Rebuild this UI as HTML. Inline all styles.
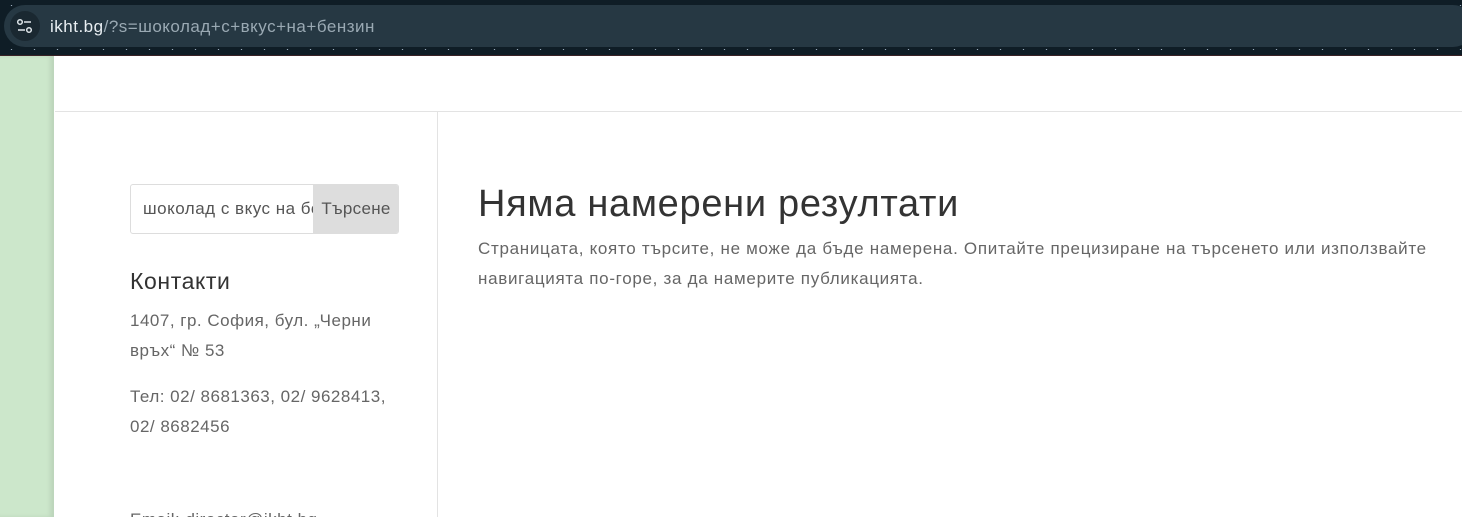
<!DOCTYPE html>
<html><head><meta charset="utf-8">
<style>
html,body{margin:0;padding:0;width:1462px;height:517px;overflow:hidden;background:#fff;font-family:"Liberation Sans","DejaVu Sans",sans-serif;}
.wrap{position:relative;width:1462px;height:517px;overflow:hidden;}
.top{position:absolute;left:0;top:0;width:1462px;height:55px;background:#0f1d26;
background-image:radial-gradient(#9ab 0.6px,transparent 1px),radial-gradient(#567 0.6px,transparent 1px);background-size:23px 11px,37px 7px;background-position:0 0,11px 3px;border-bottom:1px solid #3a2226;}
.pill{position:absolute;left:4px;top:5px;width:1470px;height:42px;border-radius:21px;background:#263843;}
.ic{position:absolute;left:6px;top:6px;width:30px;height:30px;border-radius:15px;background:#1a2831;}
.url{position:absolute;left:46px;top:12px;font-size:17px;color:#e8eef2;letter-spacing:0.5px;}
.url span{color:#9aa9b3;}
.green{position:absolute;left:0;top:56px;width:54px;height:461px;background:#cce7cb;box-shadow:inset -4px 0 4px rgba(0,0,0,0.08);}
.hdr{position:absolute;left:55px;top:111px;width:1407px;height:1px;background:#e3e3e3;}
.vline{position:absolute;left:437px;top:112px;width:1px;height:405px;background:#e3e3e3;}
.search{position:absolute;left:130px;top:184px;width:267px;height:48px;border:1px solid #ddd;border-radius:3px;overflow:hidden;}
.search .t{position:absolute;left:12px;top:14px;font-size:17px;letter-spacing:0.5px;color:#555;white-space:nowrap;width:170px;overflow:hidden;}
.search .b{position:absolute;left:182px;top:0;width:86px;height:48px;background:#ddd;color:#555;font-size:17px;letter-spacing:0.3px;line-height:48px;text-align:center;white-space:nowrap;}
.side{position:absolute;left:130px;color:#666;font-size:17px;letter-spacing:0.5px;line-height:30px;}
h2{position:absolute;left:130px;top:268px;margin:0;font-weight:normal;font-size:23px;letter-spacing:0.6px;color:#333;}
h1{position:absolute;left:478px;top:183px;margin:0;font-weight:normal;font-size:38px;letter-spacing:0.7px;color:#333;white-space:nowrap;}
.msg{position:absolute;left:478px;top:234px;width:975px;font-size:17px;letter-spacing:0.7px;line-height:30px;color:#666;}
</style></head><body><div class="wrap">
<div class="top"><div class="pill"><div class="ic">
<svg width="30" height="30" viewBox="0 0 30 30"><circle cx="10" cy="11" r="2.3" fill="none" stroke="#dfe6ea" stroke-width="1.5"/><line x1="14" y1="11" x2="21" y2="11" stroke="#dfe6ea" stroke-width="1.5"/><line x1="8" y1="19" x2="15" y2="19" stroke="#dfe6ea" stroke-width="1.5"/><circle cx="19" cy="19" r="2.3" fill="none" stroke="#dfe6ea" stroke-width="1.5"/></svg>
</div><div class="url">ikht.bg<span>/?s=шоколад+с+вкус+на+бензин</span></div></div></div>
<div class="green"></div>
<div class="hdr"></div>
<div class="vline"></div>
<div class="search"><div class="t">шоколад с вкус на бензин</div><div class="b">Търсене</div></div>
<h2>Контакти</h2>
<div class="side" style="top:306px;width:262px">1407, гр. София, бул. „Черни връх“ № 53</div>
<div class="side" style="top:382px;width:262px">Тел: 02/ 8681363, 02/ 9628413, 02/ 8682456</div>
<div class="side" style="top:505px;white-space:nowrap">Email: director@ikht.bg</div>
<h1>Няма намерени резултати</h1>
<div class="msg">Страницата, която търсите, не може да бъде намерена. Опитайте прецизиране на търсенето или използвайте навигацията по-горе, за да намерите публикацията.</div>
</div></body></html>
